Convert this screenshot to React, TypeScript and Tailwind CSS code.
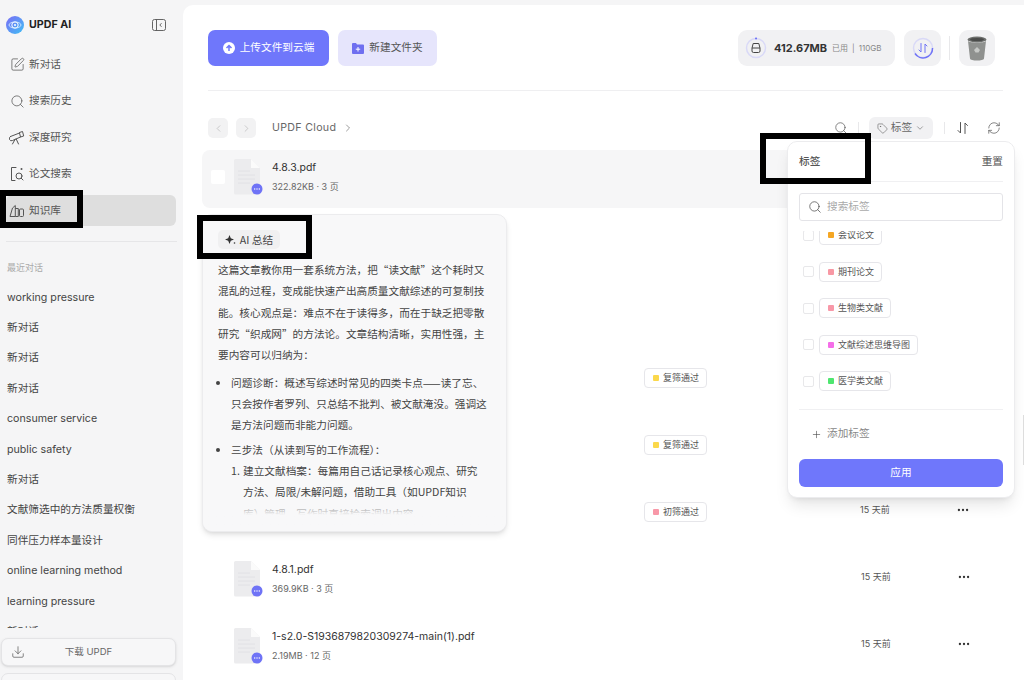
import React from 'react'
import { Search, SquarePen, ChevronLeft, ChevronRight, ChevronDown, Tag, RefreshCw, Download, Plus, MoreHorizontal } from 'lucide-react'

const font = { fontFamily: '"Inter", "Noto Sans CJK SC", sans-serif' }

function Telescope() {
  return (
    <svg width="16" height="16" viewBox="0 0 16 16" fill="none" stroke="#555" strokeWidth="1" strokeLinejoin="round" strokeLinecap="round">
      <path d="M1.5 6.5l9-3.5 1 4-8 3.5a1.500 1.500 0 0 1-2-4z" />
      <path d="M10.500 2.500l3-1 1.200 4.500-3.200 1" />
      <path d="M6 9.500L3.500 14M7.200 9l2.300 5" />
    </svg>
  )
}

function PaperSearch() {
  return (
    <svg width="16" height="16" viewBox="0 0 16 16" fill="none" stroke="#555" strokeWidth="1" strokeLinecap="round">
      <path d="M7 1.500H2.500v13H6" />
      <circle cx="10" cy="10" r="3" />
      <path d="M12.200 12.200L14 14" />
      <circle cx="12.500" cy="3" r="1" fill="#555" stroke="none" />
    </svg>
  )
}

function Books() {
  return (
    <svg width="16" height="16" viewBox="0 0 16 16" fill="none" stroke="#555" strokeWidth="1" strokeLinejoin="round">
      <path d="M1 13.500L3.500 5l2.800-2.500V13.500z" />
      <path d="M6.300 5.500h3v8h-3" />
      <rect x="10.500" y="6" width="4" height="7.500" rx="1" />
    </svg>
  )
}

function Logo() {
  return (
    <svg width="18" height="18" viewBox="0 0 18 18">
      <defs>
        <linearGradient id="lg" x1="0" y1="0" x2="1" y2="1">
          <stop offset="0" stopColor="#7b6cf6" />
          <stop offset="1" stopColor="#3fc0f5" />
        </linearGradient>
      </defs>
      <circle cx="9" cy="9" r="9" fill="url(#lg)" />
      <circle cx="9" cy="9" r="3.200" fill="none" stroke="#fff" strokeWidth="1" />
      <ellipse cx="9" cy="9" rx="6" ry="3" fill="none" stroke="#dff3ff" strokeWidth="0.800" />
      <circle cx="9" cy="9" r="1" fill="#fff" />
    </svg>
  )
}

function CollapseIcon() {
  return (
    <svg width="14" height="12" viewBox="0 0 14 12" fill="none" stroke="#555" strokeWidth="0.900">
      <rect x="0.500" y="0.500" width="13" height="11" rx="2" />
      <path d="M4.500 0.500v11" />
      <path d="M9.500 4.200L7.800 6l1.700 1.800" />
    </svg>
  )
}

function FileIcon() {
  return (
    <svg width="30" height="38" viewBox="0 0 30 38" className="shrink-0">
      <path d="M1 2.500A1.500 1.500 0 0 1 2.500 1H18l9 9v25a1.500 1.500 0 0 1-1.500 1.500h-23A1.500 1.500 0 0 1 1 35z" fill="#ececee" />
      <path d="M18 1l9 9h-9z" fill="#fbfbfb" />
      <path d="M5 13h12M5 17h17M5 21h17M5 25h12" stroke="#e0e0e2" strokeWidth="0.800" />
      <circle cx="24" cy="31" r="5.500" fill="#6f73f6" />
      <path d="M20 35.500l1.500-2 2 1.500z" fill="#6f73f6" />
      <circle cx="21.700" cy="31" r="0.700" fill="#fff" />
      <circle cx="24" cy="31" r="0.700" fill="#fff" />
      <circle cx="26.300" cy="31" r="0.700" fill="#fff" />
    </svg>
  )
}

function StorageIcon() {
  return (
    <svg width="22" height="22" viewBox="0 0 22 22" fill="none">
      <circle cx="11" cy="11" r="9.500" stroke="#d9d9f7" strokeWidth="1.500" />
      <path d="M11 1.500a1 1 0 0 1 0.100 0" stroke="#6f73f6" strokeWidth="2" strokeLinecap="round" />
      <path d="M7 11l1.200-4.500h5.600L15 11v3a1.500 1.500 0 0 1-1.500 1.500h-5A1.500 1.500 0 0 1 7 14z" stroke="#444" strokeWidth="1" />
      <path d="M7 11h8" stroke="#444" strokeWidth="1" />
    </svg>
  )
}

function SyncIcon() {
  return (
    <svg width="22" height="22" viewBox="0 0 22 22" fill="none">
      <circle cx="11" cy="11" r="9.500" stroke="#d9d9f7" strokeWidth="1.500" />
      <path d="M20.500 11A9.500 9.500 0 0 1 3 16.500" stroke="#6f73f6" strokeWidth="1.500" />
      <path d="M9 6.500v8.500l-2-2M13 15.500V7l2 2" stroke="#6f73f6" strokeWidth="1" strokeLinecap="round" strokeLinejoin="round" />
    </svg>
  )
}

function TrashIcon() {
  return (
    <svg width="22" height="26" viewBox="0 0 22 26">
      <ellipse cx="11" cy="4.500" rx="9.500" ry="3" fill="#6d6f6d" />
      <ellipse cx="11" cy="4.500" rx="7" ry="1.600" fill="#4a4b4a" />
      <path d="M2 6l2 17.500c0.200 1.500 3.500 2 7 2s6.800-0.500 7-2L20 6c-2 2-16 2-18 0z" fill="#8f918f" />
      <path d="M8 15l3-3 3 3-1.500 2.500h-3z" fill="#c6c8c6" />
    </svg>
  )
}

type NavItem = { label: string; icon: React.ReactNode; active?: boolean }

const nav: NavItem[] = [
  { label: '新对话', icon: <SquarePen size={15} strokeWidth={1.2} color="#555" /> },
  { label: '搜索历史', icon: <Search size={15} strokeWidth={1.2} color="#555" /> },
  { label: '深度研究', icon: <Telescope /> },
  { label: '论文搜索', icon: <PaperSearch /> },
  { label: '知识库', icon: <Books />, active: true },
]

const recent = [
  'working pressure', '新对话', '新对话', '新对话', 'consumer service', 'public safety', '新对话',
  '文献筛选中的方法质量权衡', '同伴压力样本量设计', 'online learning method', 'learning pressure', '新对话',
]

type Row = { name?: string; meta?: string; tag?: string; dot?: string; time?: string; hover?: boolean }

// rows 2-6 sit under the summary card, their names can't be read in the shot
const rows: Row[] = [
  { name: '4.8.3.pdf', meta: '322.82KB · 3 页', hover: true },
  {},
  {},
  { tag: '复筛通过', dot: 'bg-[#fbd84b]' },
  { tag: '复筛通过', dot: 'bg-[#fbd84b]' },
  { tag: '初筛通过', dot: 'bg-[#f898a8]', time: '15 天前' },
  { name: '4.8.1.pdf', meta: '369.9KB · 3 页', time: '15 天前' },
  { name: '1-s2.0-S1936879820309274-main(1).pdf', meta: '2.19MB · 12 页', time: '15 天前' },
]

const tags = [
  { label: '会议论文', dot: 'bg-[#f5a623]' },
  { label: '期刊论文', dot: 'bg-[#f898a4]' },
  { label: '生物类文献', dot: 'bg-[#f898a8]' },
  { label: '文献综述思维导图', dot: 'bg-[#f56ee8]' },
  { label: '医学类文献', dot: 'bg-[#4ee66f]' },
]

function Chip({ label, dot }: { label: string; dot: string }) {
  return (
    <div className="flex h-[20px] w-fit items-center gap-[4px] rounded-[4px] border border-[#e6e6ea] bg-white pl-[8px] pr-[7px] text-[9px] text-[#555]">
      <span className={`h-[6px] w-[6px] rounded-[1px] ${dot}`} />
      {label}
    </div>
  )
}

function Sidebar() {
  return (
    <aside className="flex h-full w-[183px] shrink-0 flex-col overflow-hidden bg-[#f5f5f6]">
      <div className="flex h-[49px] shrink-0 items-center justify-between pl-[6px] pr-[17px]">
        <div className="flex items-center gap-[5px]">
          <Logo />
          <span className="text-[10.67px] font-bold text-[#222]">UPDF AI</span>
        </div>
        <CollapseIcon />
      </div>
      <div className="flex shrink-0 flex-col">
        {nav.map((n) => (
          <div key={n.label} className={`mb-[5.500px] ml-[6px] mr-[7px] flex h-[31px] items-center gap-[4px] rounded-[6px] pl-[3px] text-[10.67px] text-[#555] ${n.active ? 'bg-[#dedede]' : ''}`}>
            <span className="flex w-[16px] justify-center">{n.icon}</span>
            {n.label}
          </div>
        ))}
      </div>
      <div className="mx-[6px] mt-[9px] h-px shrink-0 bg-[#e6e6e8]" />
      <div className="mt-[20px] shrink-0 pl-[7px] text-[9px] leading-[12px] text-[#aaa]">最近对话</div>
      <div className="mt-[9px] min-h-0 flex-1 overflow-hidden">
        {recent.map((r, i) => (
          <div key={i} className="flex h-[30.400px] items-center pl-[7px] text-[10.67px] text-[#444]">{r}</div>
        ))}
      </div>
      <div className="flex h-[52px] shrink-0 flex-col gap-[7px] pl-[1px] pt-[10px]">
        <div className="flex h-[28px] w-[175px] shrink-0 items-center rounded-[7px] border border-[#e4e4e6] bg-[#f7f7f8] pl-[9px] text-[9.500px] text-[#666] shadow-sm">
          <Download size={14} strokeWidth={1.2} color="#555" />
          <span className="flex-1 pr-[23px] text-center">下载 UPDF</span>
        </div>
        <div className="h-[28px] w-[175px] shrink-0 rounded-[7px] border border-[#e4e4e6] bg-[#f7f7f8]" />
      </div>
    </aside>
  )
}

function TopBar() {
  return (
    <div className="flex h-[36px] items-center pr-[29px]">
      <button className="flex h-[36px] w-[121px] items-center justify-center gap-[5px] rounded-[7px] bg-[#6f77fb] text-[10.67px] text-white">
        <span className="flex h-[12px] w-[12px] items-center justify-center rounded-full bg-white">
          <svg width="8" height="8" viewBox="0 0 8 8" fill="none" stroke="#6f77fb" strokeWidth="1.500"><path d="M4 7V1.500M1.500 4L4 1.500 6.500 4" /></svg>
        </span>
        上传文件到云端
      </button>
      <button className="ml-[9px] flex h-[36px] w-[99px] items-center justify-center gap-[5px] rounded-[7px] bg-[#e6e5fc] text-[10.67px] text-[#555]">
        <svg width="12" height="12" viewBox="0 0 12 12"><path d="M0 2a1 1 0 0 1 1-1h3l1 1.500h6a1 1 0 0 1 1 1V11a1 1 0 0 1-1 1H1a1 1 0 0 1-1-1z" fill="#6f6ff0" /><path d="M6 5v4.500M3.800 7.200h4.400" stroke="#fff" strokeWidth="1" /></svg>
        新建文件夹
      </button>
      <div className="ml-auto flex h-[36px] w-[157px] items-center rounded-[9px] bg-[#f1f1f3] pl-[7px]">
        <StorageIcon />
        <span className="ml-[7px] text-[11px] font-bold text-[#333]">412.67MB</span>
        <span className="ml-[5px] flex items-center gap-[4px] text-[8px] text-[#888]">
          <span>已用</span><span>|</span><span>110GB</span>
        </span>
      </div>
      <div className="ml-[9px] flex h-[36px] w-[37px] items-center justify-center rounded-[9px] bg-[#f1f1f3]">
        <SyncIcon />
      </div>
      <div className="ml-[8px] mr-[9px] h-[24px] w-px bg-[#e8e8ea]" />
      <div className="flex h-[36px] w-[36px] items-center justify-center rounded-[9px] bg-[#f1f1f3]">
        <TrashIcon />
      </div>
    </div>
  )
}

function Toolbar() {
  return (
    <div className="mt-[25px] flex h-[24px] items-center pr-[23px]">
      <span className="flex h-[20px] w-[20px] items-center justify-center rounded-[5px] bg-[#f2f2f3]"><ChevronLeft size={11} strokeWidth={1.2} color="#aaa" /></span>
      <span className="ml-[8px] flex h-[20px] w-[20px] items-center justify-center rounded-[5px] bg-[#f2f2f3]"><ChevronRight size={11} strokeWidth={1.2} color="#aaa" /></span>
      <span className="ml-[16px] text-[10.67px] tracking-[0.3px] text-[#666]">UPDF Cloud</span>
      <ChevronRight size={12} strokeWidth={1.3} color="#666" className="ml-[6px]" />
      <Search size={14} strokeWidth={1.2} color="#555" className="ml-auto" />
      <span className="mx-[10px] h-[12px] w-px bg-[#e8e8ea]" />
      <span className="flex h-[22px] w-[64px] items-center justify-center gap-[3px] rounded-[6px] bg-[#f1f1f3] text-[10.67px] text-[#666]">
        <Tag size={11} strokeWidth={1.2} color="#555" />
        标签
        <ChevronDown size={10} strokeWidth={1.3} color="#555" />
      </span>
      <span className="mx-[11px] h-[12px] w-px bg-[#e8e8ea]" />
      <svg width="14" height="14" viewBox="0 0 14 14" fill="none" stroke="#555" strokeWidth="1" strokeLinecap="round" strokeLinejoin="round"><path d="M4.500 1.500v10.500L2 9.500M9 12.500V2l2.500 2.500" /></svg>
      <RefreshCw size={14} strokeWidth={1.2} color="#555" className="ml-[17px]" />
    </div>
  )
}

function FileRow({ row }: { row: Row }) {
  return (
    <div className={`flex h-[58px] shrink-0 items-center rounded-[8px] pb-[5px] pl-[9px] ${row.hover ? 'bg-[#f6f6f7]' : ''}`}>
      <span className={`h-[14px] w-[14px] shrink-0 rounded-[2px] ${row.hover ? 'bg-white' : ''}`} />
      <span className="ml-[8px]"><FileIcon /></span>
      <div className="ml-[9px] w-[370px] shrink-0">
        {row.name && <div className="text-[10.500px] leading-[16px] text-[#333]">{row.name}</div>}
        {row.meta && <div className="mt-[4px] text-[9px] leading-[14px] text-[#666]">{row.meta}</div>}
      </div>
      {row.tag && row.dot && <span className="ml-[2px]"><Chip label={row.tag} dot={row.dot} /></span>}
      {row.time && (
        <div className={`${row.tag ? 'ml-[153px]' : 'ml-[219px]'} mb-[4px] w-[60px] text-[9px] text-[#555]`}>{row.time}</div>
      )}
      {row.time && <MoreHorizontal size={14} strokeWidth={2} color="#333" className="mb-[4px] ml-[36px]" />}
    </div>
  )
}

function SummaryCard() {
  return (
    <div className="absolute left-[19px] top-[209px] h-[318px] w-[305px] overflow-hidden rounded-[10px] border border-[#ececee] bg-[#f8f8f9] px-[15px] font-['Noto_Sans_CJK_SC',sans-serif] shadow-md">
      <div className="mt-[15px] flex h-[19px] w-[62px] items-center justify-center gap-[4px] rounded-[5px] bg-[#f0f0f1] text-[10.67px] text-[#444]">
        <svg width="11" height="11" viewBox="0 0 11 11" fill="#333"><path d="M4.500 1l1.300 3.200L9 5.500 5.800 6.800 4.500 10 3.200 6.800 0 5.500l3.200-1.300z" /><circle cx="9.500" cy="9" r="0.800" /></svg>
        AI 总结
      </div>
      <div className="mt-[10px] w-[272px] text-[10.67px] leading-[21.330px] text-[#444]">
        这篇文章教你用一套系统方法，把“读文献”这个耗时又混乱的过程，变成能快速产出高质量文献综述的可复制技能。核心观点是：难点不在于读得多，而在于缺乏把零散研究“织成网”的方法论。文章结构清晰，实用性强，主要内容可以归纳为：
      </div>
      <ul className="mt-[6px] list-disc pl-[13px] text-[10.67px] leading-[21.330px] text-[#444]">
        <li className="w-[258px]">问题诊断：概述写综述时常见的四类卡点——读了忘、只会按作者罗列、只总结不批判、被文献淹没。强调这是方法问题而非能力问题。</li>
        <li className="mt-[3px]">
          三步法（从读到写的工作流程）：
          <div className="relative w-[247px] pl-[12px]">
            <span className="absolute left-0 top-0">1.</span>
            建立文献档案：每篇用自己话记录核心观点、研究方法、局限/未解问题，借助工具（如UPDF知识库）管理，写作时直接检索调出内容。
          </div>
        </li>
      </ul>
      <div className="absolute inset-x-0 bottom-0 h-[32px] bg-gradient-to-b from-transparent via-[#f8f8f9] to-[#f8f8f9]" />
    </div>
  )
}

function TagPopover() {
  return (
    <div className="absolute left-[604px] top-[136px] flex h-[357px] w-[228px] flex-col rounded-[10px] border border-[#ececee] bg-white px-[11px] shadow-lg">
      <div className="flex h-[39px] shrink-0 items-center justify-between text-[10.67px] text-[#555]">
        <span className="font-medium">标签</span>
        <span>重置</span>
      </div>
      <div className="h-px shrink-0 bg-[#f0f0f2]" />
      <div className="mt-[11px] flex h-[28px] shrink-0 items-center gap-[5px] rounded-[3px] border border-[#e4e4e8] pl-[8px] text-[10.67px] text-[#aaa]">
        <Search size={14} strokeWidth={1.2} color="#444" />
        搜索标签
      </div>
      <div className="mt-[10px] h-[178px] shrink-0 overflow-hidden">
        <div className="-mt-[6px] flex flex-col gap-[16.500px]">
          {tags.map((t) => (
            <div key={t.label} className="flex items-center">
              <span className="ml-[4px] h-[11px] w-[11px] rounded-[2px] border border-[#e8e8ea] bg-white" />
              <span className="ml-[5px]"><Chip label={t.label} dot={t.dot} /></span>
            </div>
          ))}
        </div>
      </div>
      <div className="h-px shrink-0 bg-[#f0f0f2]" />
      <div className="mt-[15px] flex h-[18px] shrink-0 items-center gap-[5px] pl-[12px] text-[10.67px] text-[#888]">
        <Plus size={11} strokeWidth={1.3} color="#444" />
        添加标签
      </div>
      <button className="mt-[16px] h-[28px] shrink-0 rounded-[6px] bg-[#6f77fb] text-[10.67px] text-white">应用</button>
    </div>
  )
}

export default function App() {
  return (
    <div className="relative flex h-[680px] w-[1024px] overflow-hidden bg-[#f5f5f6]" style={font}>
      <Sidebar />
      <main className="relative mt-[5px] flex h-[675px] flex-1 flex-col overflow-hidden rounded-tl-[10px] bg-white pl-[25px] pt-[25px]">
        <TopBar />
        <div className="mr-[21px] mt-[24px] h-px bg-[#efeff1]" />
        <Toolbar />
        <div className="-ml-[6px] mr-[36px] mt-[10px] flex flex-col gap-[9px]">
          {rows.map((r, i) => <FileRow key={i} row={r} />)}
        </div>
        <SummaryCard />
        <TagPopover />
        <div className="absolute right-0 top-[410px] h-[50px] w-[1px] bg-[#ddd]" />
      </main>
      {/* black marker boxes drawn over the shot */}
      <div className="absolute left-0 top-[190px] h-[38px] w-[83px] border-[6px] border-black" />
      <div className="absolute left-[197px] top-[215px] h-[44px] w-[115px] border-[6px] border-black" />
      <div className="absolute left-[760px] top-[133px] h-[51px] w-[111px] border-[6px] border-black" />
    </div>
  )
}
